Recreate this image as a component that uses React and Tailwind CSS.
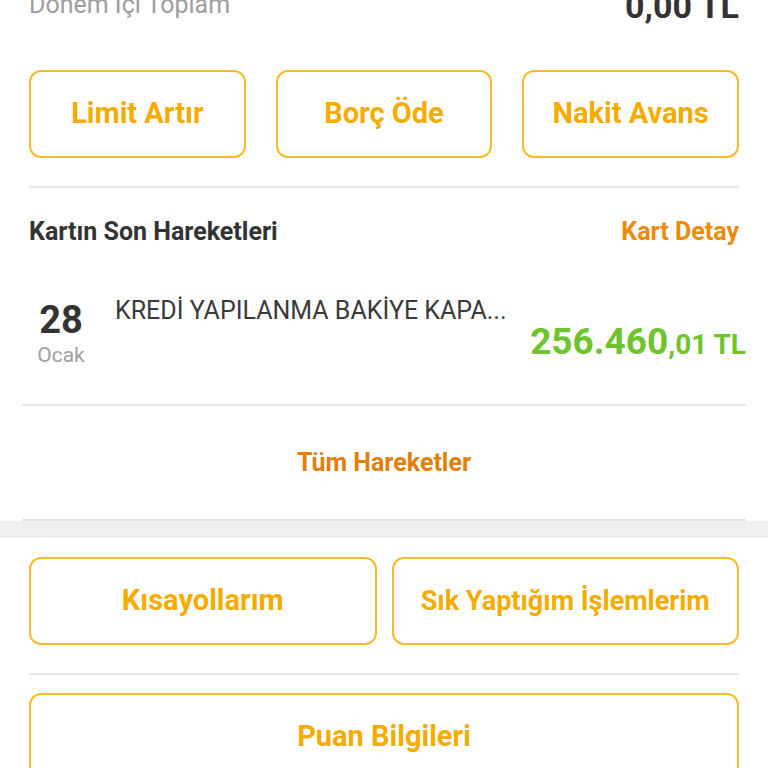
import React from 'react';

const OutlineButton = ({ label, className = '' }) => (
  <button
    className={`flex h-[88px] items-center justify-center rounded-[12px] border-2 border-[#f7bb2a] bg-white font-bold text-[#f5ac00] ${className}`}
  >
    {label}
  </button>
);

const App = () => {
  return (
    <div
      className="h-[768px] w-[768px] overflow-hidden bg-white"
      style={{ fontFamily: 'Roboto, "Liberation Sans", sans-serif' }}
    >
      {/* Period total */}
      <div className="flex h-[70px] items-start justify-between px-[29px]">
        <span className="-mt-[10px] text-[25px] leading-[30px] text-[#9e9e9e]">Dönem İçi Toplam</span>
        <span className="-mt-[14px] text-[34px] font-bold leading-[40px] text-[#333333]">0,00 TL</span>
      </div>

      {/* Card actions */}
      <div className="grid grid-cols-3 gap-[30px] px-[29px]">
        <OutlineButton label="Limit Artır" className="text-[29px]" />
        <OutlineButton label="Borç Öde" className="text-[29px]" />
        <OutlineButton label="Nakit Avans" className="text-[29px]" />
      </div>

      <div className="mx-[29px] mt-[28px] h-[2px] bg-[#e6e6e6]" />

      {/* Recent transactions */}
      <div className="flex h-[88px] items-center justify-between px-[29px]">
        <span className="text-[25px] font-bold text-[#333333]">Kartın Son Hareketleri</span>
        <span className="text-[25px] font-bold text-[#ec8a0c]">Kart Detay</span>
      </div>

      <div className="mx-[22px] flex h-[128px] items-start">
        <div className="flex w-[78px] flex-col items-center pt-[25px]">
          <span className="text-[38px] font-bold leading-[38px] text-[#333333]">28</span>
          <span className="mt-[4px] text-[21px] leading-[24px] text-[#a0a0a0]">Ocak</span>
        </div>
        <div className="ml-[15px] flex-1 pt-[20px] text-[25px] leading-[30px] text-[#3a3a3a]">
          KREDİ YAPILANMA BAKİYE KAPA...
        </div>
        <div className="pt-[44px] font-bold leading-[44px] text-[#6fc42d]">
          <span className="text-[37px]">256.460</span>
          <span className="text-[28px]">,01 TL</span>
        </div>
      </div>

      <div className="mx-[22px] h-[2px] bg-[#e6e6e6]" />

      <div className="flex h-[113px] items-center justify-center">
        <span className="text-[25px] font-bold text-[#e07f0a]">Tüm Hareketler</span>
      </div>

      <div className="mx-[22px] h-[2px] bg-[#e4e4e4]" />
      <div className="h-[17px] bg-[#f1f0f0]" />

      {/* Shortcuts */}
      <div className="mt-[19px] grid grid-cols-2 gap-[15px] px-[29px]">
        <OutlineButton label="Kısayollarım" className="text-[29px]" />
        <OutlineButton label="Sık Yaptığım İşlemlerim" className="text-[27px]" />
      </div>

      <div className="mx-[29px] mt-[28px] h-[2px] bg-[#e6e6e6]" />

      <div className="mt-[18px] px-[29px]">
        <OutlineButton label="Puan Bilgileri" className="w-full text-[29px]" />
      </div>
    </div>
  );
};

export default App;
